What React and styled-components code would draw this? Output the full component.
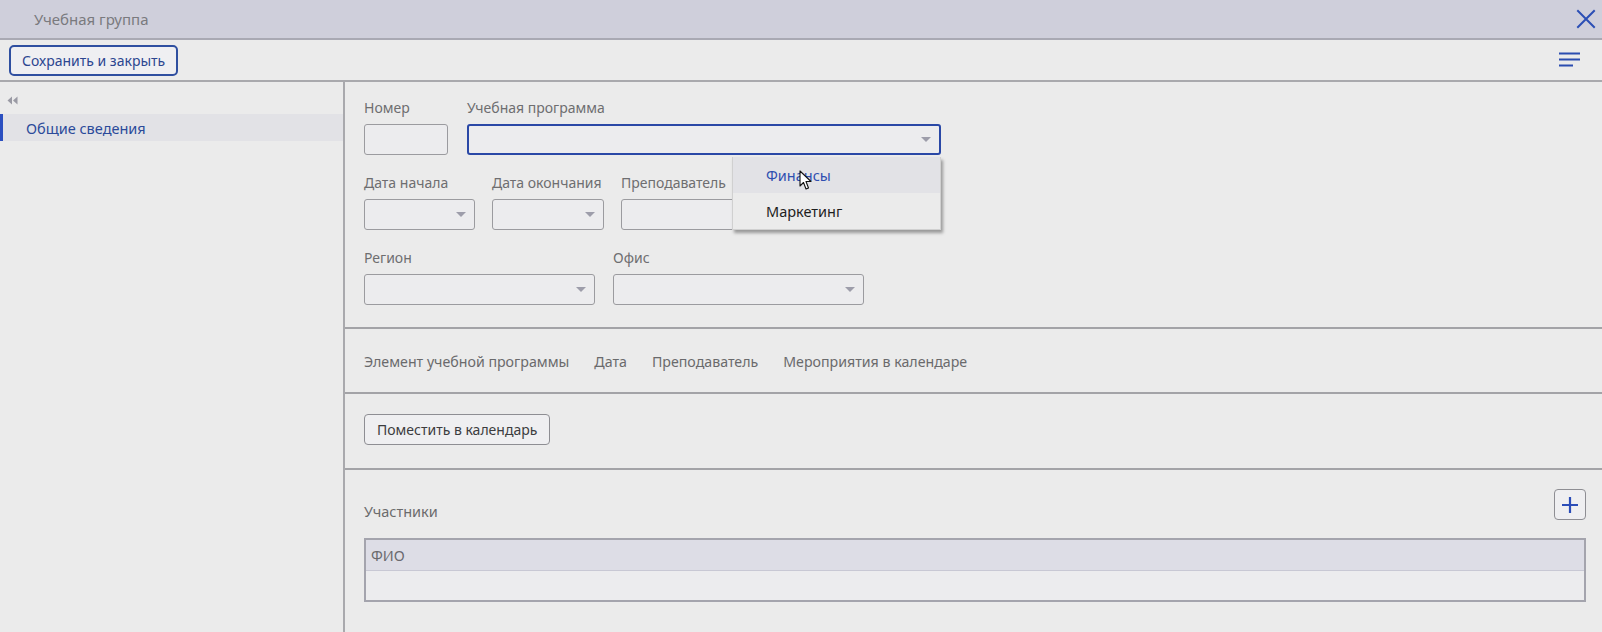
import React from "react";
import styled, { createGlobalStyle } from "styled-components";

const Global = createGlobalStyle`
  html, body { margin: 0; padding: 0; }
  body {
    background: #ebebeb;
    font-family: "Segoe UI", "Noto Sans", "Open Sans", sans-serif;
    color: #555;
    overflow: hidden;
  }
  * { box-sizing: border-box; }
`;

const Page = styled.div`
  width: 1602px;
  height: 632px;
  display: flex;
  flex-direction: column;
  background: #ebebeb;
`;

const TitleBar = styled.div`
  height: 40px;
  flex: none;
  background: #cfcfdb;
  border-bottom: 2px solid #a9a9b3;
  display: flex;
  align-items: center;
  justify-content: space-between;
  padding: 0 4px 0 34px;
`;

const Title = styled.div`
  font-size: 15px;
  color: #7a7a7e;
`;

const IconButton = styled.button`
  border: none;
  background: transparent;
  padding: 0;
  display: flex;
  align-items: center;
  justify-content: center;
  cursor: pointer;
  width: ${(p) => p.$size || 24}px;
  height: ${(p) => p.$size || 24}px;
`;

const Toolbar = styled.div`
  height: 42px;
  flex: none;
  display: flex;
  align-items: center;
  justify-content: space-between;
  padding: 0 20px 0 9px;
  border-bottom: 2px solid #a9a9ad;
  background: #ebebeb;
`;

const PrimaryButton = styled.button`
  height: 31px;
  padding: 0 11px;
  border: 2px solid #2f4fa0;
  border-radius: 5px;
  background: #efeff2;
  color: #2c4690;
  font-family: inherit;
  font-size: 14px;
`;

const Body = styled.div`
  flex: 1;
  display: flex;
  min-height: 0;
`;

const Sidebar = styled.div`
  width: 345px;
  flex: none;
  border-right: 2px solid #a9a9ad;
  padding-top: 7px;
`;

const Collapse = styled.div`
  height: 23px;
  padding-left: 7px;
  display: flex;
  align-items: center;
`;

const NavItem = styled.div`
  height: 27px;
  margin-top: 2px;
  display: flex;
  align-items: center;
  padding-left: 23px;
  border-left: 3px solid ${(p) => (p.$active ? "#2b4fc0" : "transparent")};
  background: ${(p) => (p.$active ? "#e2e2e6" : "transparent")};
  color: #2b4a9a;
  font-size: 14.5px;
`;

const Main = styled.div`
  flex: 1;
  display: flex;
  flex-direction: column;
  min-width: 0;
`;

const Section = styled.div`
  padding: ${(p) => p.$pad};
  border-bottom: ${(p) => (p.$last ? "none" : "2px solid #a3a3a7")};
  position: relative;
`;

const FormRow = styled.div`
  display: flex;
  gap: ${(p) => p.$gap || 18}px;
  margin-bottom: ${(p) => (p.$last ? 0 : 18)}px;
`;

const Field = styled.div`
  display: flex;
  flex-direction: column;
  width: ${(p) => p.$w}px;
  flex: none;
  position: relative;
`;

const Label = styled.div`
  height: 20px;
  line-height: 20px;
  font-size: 14px;
  color: #6e6e70;
  margin-bottom: 6px;
  white-space: nowrap;
`;

const InputBox = styled.div`
  height: 31px;
  border: ${(p) => (p.$focus ? "2px solid #2a48a6" : "1.5px solid #9b9b9f")};
  border-radius: 3px;
  background: #ececee;
  display: flex;
  align-items: center;
  justify-content: flex-end;
  padding-right: 8px;
`;

const Caret = styled.div`
  width: 0;
  height: 0;
  border-left: 5px solid transparent;
  border-right: 5px solid transparent;
  border-top: 5px solid #9d9daa;
`;

const Dropdown = styled.div`
  position: absolute;
  right: 0;
  top: 59px;
  width: 209px;
  background: #ebebeb;
  border: 1px solid #d0d0d0;
  border-top: none;
  box-shadow: 2px 3px 3px rgba(0, 0, 0, 0.35);
  z-index: 5;
`;

const Option = styled.div`
  height: 36px;
  display: flex;
  align-items: center;
  padding-left: 33px;
  font-size: 14.5px;
  color: ${(p) => (p.$hover ? "#2f4eb0" : "#1e1e1e")};
  background: ${(p) => (p.$hover ? "#e2e2e6" : "transparent")};
  position: relative;
`;

const Cursor = styled.svg`
  position: absolute;
  left: 66px;
  top: 13px;
`;

const Tabs = styled.div`
  display: flex;
  gap: 25px;
  height: 20px;
  align-items: center;
`;

const Tab = styled.div`
  font-size: 14.2px;
  color: #6a6a6c;
  white-space: nowrap;
`;

const SecondaryButton = styled.button`
  height: 31px;
  padding: 0 12px;
  border: 1.5px solid #8e8e93;
  border-radius: 4px;
  background: #efeff1;
  color: #3c3c3e;
  font-family: inherit;
  font-size: 14px;
`;

const HeaderRow = styled.div`
  display: flex;
  justify-content: space-between;
  align-items: flex-end;
  height: 31px;
  margin-bottom: 18px;
`;

const SectionTitle = styled.div`
  font-size: 14.5px;
  line-height: 20px;
  color: #6b6b6d;
  margin-bottom: -1px;
`;

const AddButton = styled.button`
  width: 32px;
  height: 31px;
  border: 1.5px solid #8e8e93;
  border-radius: 4px;
  background: #efeff1;
  padding: 0;
  display: flex;
  align-items: center;
  justify-content: center;
`;

const Table = styled.div`
  border: 2px solid #a4a4ad;
  height: 64px;
  display: flex;
  flex-direction: column;
`;

const TableHead = styled.div`
  height: 31px;
  background: #dddde6;
  border-bottom: 1px solid #c8c8d4;
  display: flex;
  align-items: center;
  padding-left: 5px;
  font-size: 14.5px;
  color: #6a6a6e;
`;

const TableBody = styled.div`
  flex: 1;
  background: #ececee;
`;

const Select = ({ w, label }) => (
  <Field $w={w}>
    <Label>{label}</Label>
    <InputBox>
      <Caret />
    </InputBox>
  </Field>
);

const TextInput = ({ w, label }) => (
  <Field $w={w}>
    <Label>{label}</Label>
    <InputBox />
  </Field>
);

export default function App() {
  return (
    <Page>
      <Global />
      <TitleBar>
        <Title>Учебная группа</Title>
        <IconButton $size={24} aria-label="Закрыть">
          <svg width="20" height="20" viewBox="0 0 20 20">
            <path d="M2 2 L18 18 M18 2 L2 18" stroke="#2c4fb5" strokeWidth="2" strokeLinecap="square" />
          </svg>
        </IconButton>
      </TitleBar>
      <Toolbar>
        <PrimaryButton>Сохранить и закрыть</PrimaryButton>
        <IconButton $size={24} aria-label="Меню">
          <svg width="22" height="18" viewBox="0 0 22 18">
            <path d="M0 2.5 H21 M0 8.5 H21 M0 14.5 H14" stroke="#2b4db0" strokeWidth="2.2" />
          </svg>
        </IconButton>
      </Toolbar>
      <Body>
        <Sidebar>
          <Collapse>
            <svg width="11" height="9" viewBox="0 0 11 9">
              <path d="M5 0.5 L0.5 4.5 L5 8.5 Z M10.5 0.5 L6 4.5 L10.5 8.5 Z" fill="#9a9aa4" />
            </svg>
          </Collapse>
          <NavItem $active>Общие сведения</NavItem>
        </Sidebar>
        <Main>
          <Section $pad="16px 16px 22px 19px">
            <FormRow $gap={19}>
              <TextInput w={84} label="Номер" />
              <Field $w={474}>
                <Label>Учебная программа</Label>
                <InputBox $focus>
                  <Caret />
                </InputBox>
                <Dropdown>
                  <Option $hover>
                    Финансы
                    <Cursor width="14" height="21" viewBox="0 0 14 21">
                      <path d="M1 1 L1 16 L4.5 12.5 L7 19 L9.5 18 L7 11.5 L12 11.5 Z" fill="#fff" stroke="#111" strokeWidth="1.1" strokeLinejoin="round" />
                    </Cursor>
                  </Option>
                  <Option>Маркетинг</Option>
                </Dropdown>
              </Field>
            </FormRow>
            <FormRow $gap={17}>
              <Select w={111} label="Дата начала" />
              <Select w={112} label="Дата окончания" />
              <TextInput w={240} label="Преподаватель" />
            </FormRow>
            <FormRow $gap={18} $last>
              <Select w={231} label="Регион" />
              <Select w={251} label="Офис" />
            </FormRow>
          </Section>
          <Section $pad="22px 16px 21px 19px">
            <Tabs>
              <Tab>Элемент учебной программы</Tab>
              <Tab>Дата</Tab>
              <Tab>Преподаватель</Tab>
              <Tab>Мероприятия в календаре</Tab>
            </Tabs>
          </Section>
          <Section $pad="20px 16px 23px 19px">
            <SecondaryButton>Поместить в календарь</SecondaryButton>
          </Section>
          <Section $pad="19px 16px 0 19px" $last>
            <HeaderRow>
              <SectionTitle>Участники</SectionTitle>
              <AddButton aria-label="Добавить">
                <svg width="18" height="18" viewBox="0 0 18 18">
                  <path d="M9 1 V17 M1 9 H17" stroke="#2b4db8" strokeWidth="2.2" />
                </svg>
              </AddButton>
            </HeaderRow>
            <Table>
              <TableHead>ФИО</TableHead>
              <TableBody />
            </Table>
          </Section>
        </Main>
      </Body>
    </Page>
  );
}
